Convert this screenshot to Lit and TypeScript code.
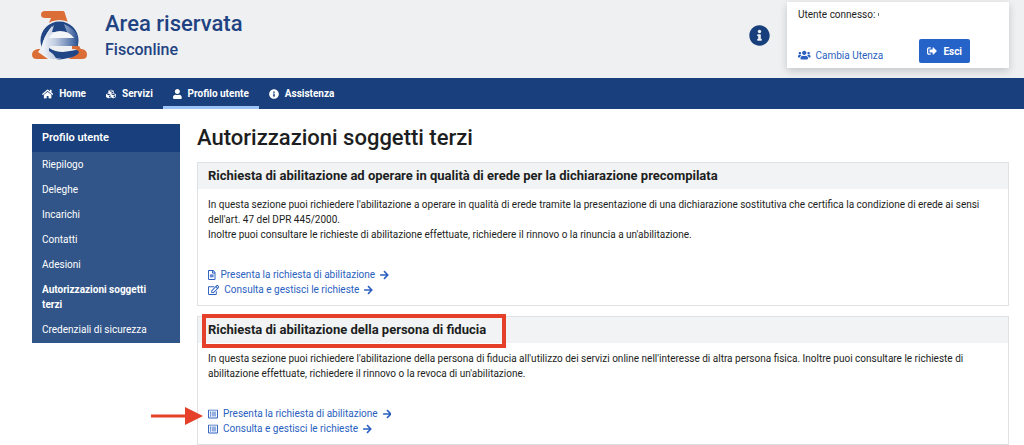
import { LitElement, html, css, svg } from "lit";
import { customElement } from "lit/decorators.js";
import { classMap } from "lit/directives/class-map.js";

type Icon = { w: number; d: string };

const ICONS: Record<string, Icon> = {
  home: { w: 576, d: "M280.37 148.26L96 300.11V464a16 16 0 0 0 16 16l112.06-.29a16 16 0 0 0 15.92-16V368a16 16 0 0 1 16-16h64a16 16 0 0 1 16 16v95.64a16 16 0 0 0 16 16.05L464 480a16 16 0 0 0 16-16V300L295.67 148.26a12.19 12.19 0 0 0-15.3 0zM571.6 251.47L488 182.56V44.05a12 12 0 0 0-12-12h-56a12 12 0 0 0-12 12v72.61L318.47 43a48 48 0 0 0-61 0L4.34 251.47a12 12 0 0 0-1.6 16.9l25.5 31A12 12 0 0 0 45.15 301l235.22-193.74a12.19 12.19 0 0 1 15.3 0L530.9 301a12 12 0 0 0 16.9-1.6l25.5-31a12 12 0 0 0-1.7-16.93z" },
  cubes: { w: 512, d: "M488.6 250.2L392 214V105.5c0-15-9.3-28.4-23.4-33.7l-100-37.5c-8.1-3.1-17.1-3.1-25.3 0l-100 37.5c-14.1 5.3-23.4 18.7-23.4 33.7V214l-96.6 36.2C9.3 255.5 0 268.9 0 283.9V394c0 13.6 7.7 26.1 19.9 32.2l100 50c10.1 5.1 22.1 5.1 32.2 0l103.9-52 103.9 52c10.1 5.1 22.1 5.1 32.2 0l100-50c12.2-6.1 19.9-18.6 19.9-32.2V283.9c0-15-9.3-28.4-23.4-33.7zM358 214.8l-85 31.9v-68.2l85-37v73.3zM154 104.1l102-38.2 102 38.2v.6l-102 41.4-102-41.4v-.6zm84 291.1l-85 42.5v-79.1l85-38.8v75.4zm0-112l-102 41.4-102-41.4v-.6l102-38.2 102 38.2v.6zm240 112l-85 42.5v-79.1l85-38.8v75.4zm0-112l-102 41.4-102-41.4v-.6l102-38.2 102 38.2v.6z" },
  user: { w: 448, d: "M224 256c70.7 0 128-57.3 128-128S294.7 0 224 0 96 57.3 96 128s57.3 128 128 128zm89.6 32h-16.7c-22.2 10.2-46.9 16-72.9 16s-50.6-5.8-72.9-16h-16.7C60.2 288 0 348.2 0 422.4V464c0 26.5 21.5 48 48 48h352c26.5 0 48-21.5 48-48v-41.6c0-74.2-60.2-134.4-134.4-134.4z" },
  info: { w: 512, d: "M256 8C119.043 8 8 119.083 8 256c0 136.997 111.043 248 248 248s248-111.003 248-248C504 119.083 392.957 8 256 8zm0 110c23.196 0 42 18.804 42 42s-18.804 42-42 42-42-18.804-42-42 18.804-42 42-42zm56 254c0 6.627-5.373 12-12 12h-88c-6.627 0-12-5.373-12-12v-24c0-6.627 5.373-12 12-12h12v-64h-12c-6.627 0-12-5.373-12-12v-24c0-6.627 5.373-12 12-12h64c6.627 0 12 5.373 12 12v100h12c6.627 0 12 5.373 12 12v24z" },
  users: { w: 640, d: "M96 224c35.3 0 64-28.7 64-64s-28.7-64-64-64-64 28.700-64 64 28.700 64 64 64zm448 0c35.300 0 64-28.700 64-64s-28.700-64-64-64-64 28.700-64 64 28.700 64 64 64zm32 32h-64c-17.600 0-33.500 7.100-45.100 18.600 40.300 22.100 68.900 62 75.100 109.400h66c17.700 0 32-14.300 32-32v-32c0-35.300-28.700-64-64-64zm-256 0c61.900 0 112-50.100 112-112S381.900 32 320 32 208 82.100 208 144s50.100 112 112 112zm76.800 32h-8.300c-20.800 10-43.900 16-68.500 16s-47.600-6-68.500-16h-8.300C179.600 288 128 339.600 128 403.200V432c0 26.500 21.500 48 48 48h288c26.500 0 48-21.500 48-48v-28.800c0-63.600-51.600-115.200-115.200-115.200zm-223.700-13.400C161.500 263.100 145.600 256 128 256H64c-35.300 0-64 28.700-64 64v32c0 17.700 14.300 32 32 32h65.900c6.300-47.400 34.900-87.300 75.200-109.400z" },
  signout: { w: 512, d: "M497 273L329 441c-15 15-41 4.500-41-17v-96H152c-13.300 0-24-10.700-24-24v-96c0-13.300 10.700-24 24-24h136V88c0-21.400 25.900-32 41-17l168 168c9.300 9.400 9.300 24.600 0 34zM192 436v-40c0-6.600-5.400-12-12-12H96c-17.700 0-32-14.300-32-32V160c0-17.700 14.300-32 32-32h84c6.600 0 12-5.400 12-12V76c0-6.600-5.400-12-12-12H96c-53 0-96 43-96 96v192c0 53 43 96 96 96h84c6.600 0 12-5.400 12-12z" },
  file: { w: 384, d: "M288 248v28c0 6.600-5.400 12-12 12H108c-6.600 0-12-5.400-12-12v-28c0-6.600 5.400-12 12-12h168c6.600 0 12 5.400 12 12zm-12 72H108c-6.600 0-12 5.400-12 12v28c0 6.600 5.400 12 12 12h168c6.600 0 12-5.400 12-12v-28c0-6.600-5.400-12-12-12zm108-188.100V464c0 26.500-21.500 48-48 48H48c-26.500 0-48-21.500-48-48V48C0 21.500 21.500 0 48 0h204.100C264.800 0 277 5.100 286 14.100L369.900 98c9 8.900 14.100 21.200 14.100 33.900zm-128-80V128h76.100L256 51.900zM336 464V176H232c-13.300 0-24-10.700-24-24V48H48v416h288z" },
  edit: { w: 576, d: "M402.300 344.900l32-32c5-5 13.700-1.500 13.700 5.700V464c0 26.500-21.500 48-48 48H48c-26.500 0-48-21.500-48-48V112c0-26.500 21.500-48 48-48h273.500c7.100 0 10.700 8.600 5.700 13.700l-32 32c-1.500 1.500-3.500 2.300-5.700 2.300H48v352h352V350.500c0-2.100.8-4.100 2.300-5.600zm156.600-201.800L296.300 405.700l-90.400 10c-26.200 2.900-48.500-19.200-45.600-45.600l10-90.400L432.900 17.100c22.900-22.900 59.900-22.900 82.700 0l43.200 43.200c22.900 22.900 22.900 60 .1 82.800zM460.100 174L402 115.900 216.200 301.800l-7.300 65.300 65.300-7.300L460.100 174zm64.800-79.700l-43.200-43.200c-4.100-4.100-10.800-4.100-14.800 0L436 82l58.100 58.100 30.900-30.900c4-4.200 4-10.800-.1-14.900z" },
  list: { w: 512, d: "M464 32H48C21.490 32 0 53.490 0 80v352c0 26.510 21.490 48 48 48h416c26.510 0 48-21.490 48-48V80c0-26.510-21.490-48-48-48zm-6 400H54a6 6 0 0 1-6-6V86a6 6 0 0 1 6-6h404a6 6 0 0 1 6 6v340a6 6 0 0 1-6 6zm-42-92v24c0 6.627-5.373 12-12 12H204c-6.627 0-12-5.373-12-12v-24c0-6.627 5.373-12 12-12h200c6.627 0 12 5.373 12 12zm0-96v24c0 6.627-5.373 12-12 12H204c-6.627 0-12-5.373-12-12v-24c0-6.627 5.373-12 12-12h200c6.627 0 12 5.373 12 12zm0-96v24c0 6.627-5.373 12-12 12H204c-6.627 0-12-5.373-12-12v-24c0-6.627 5.373-12 12-12h200c6.627 0 12 5.373 12 12zm-252 12c0 19.882-16.118 36-36 36s-36-16.118-36-36 16.118-36 36-36 36 16.118 36 36zm0 96c0 19.882-16.118 36-36 36s-36-16.118-36-36 16.118-36 36-36 36 16.118 36 36zm0 96c0 19.882-16.118 36-36 36s-36-16.118-36-36 16.118-36 36-36 36 16.118 36 36z" },
  arrow: { w: 448, d: "M190.500 66.900l22.200-22.200c9.400-9.400 24.600-9.400 33.900 0L441 239c9.400 9.400 9.400 24.600 0 33.900L246.600 467.300c-9.400 9.400-24.600 9.400-33.900 0l-22.200-22.200c-9.500-9.500-9.300-25 .4-34.300L311.400 296H24c-13.300 0-24-10.700-24-24v-32c0-13.300 10.700-24 24-24h287.400L190.900 101.200c-9.800-9.300-10-24.800-.4-34.300z" },
};

const icon = (name: string) => {
  const i = ICONS[name];
  return html`<svg class="icon" viewBox="0 0 ${i.w} 512" aria-hidden="true">${svg`<path d=${i.d} />`}</svg>`;
};

const NAV = [
  { label: "Home", icon: "home" },
  { label: "Servizi", icon: "cubes" },
  { label: "Profilo utente", icon: "user", active: true },
  { label: "Assistenza", icon: "info" },
];

const MENU = [
  "Riepilogo",
  "Deleghe",
  "Incarichi",
  "Contatti",
  "Adesioni",
  "Autorizzazioni soggetti terzi",
  "Credenziali di sicurezza",
];
const CURRENT = "Autorizzazioni soggetti terzi";

const PANELS = [
  {
    title: "Richiesta di abilitazione ad operare in qualità di erede per la dichiarazione precompilata",
    text: [
      "In questa sezione puoi richiedere l'abilitazione a operare in qualità di erede tramite la presentazione di una dichiarazione sostitutiva che certifica la condizione di erede ai sensi dell'art. 47 del DPR 445/2000.",
      "Inoltre puoi consultare le richieste di abilitazione effettuate, richiedere il rinnovo o la rinuncia a un'abilitazione.",
    ],
    links: [
      { label: "Presenta la richiesta di abilitazione", icon: "file" },
      { label: "Consulta e gestisci le richieste", icon: "edit" },
    ],
    marked: false,
  },
  {
    title: "Richiesta di abilitazione della persona di fiducia",
    text: [
      "In questa sezione puoi richiedere l'abilitazione della persona di fiducia all'utilizzo dei servizi online nell'interesse di altra persona fisica. Inoltre puoi consultare le richieste di abilitazione effettuate, richiedere il rinnovo o la revoca di un'abilitazione.",
    ],
    links: [
      { label: "Presenta la richiesta di abilitazione", icon: "list" },
      { label: "Consulta e gestisci le richieste", icon: "list" },
    ],
    marked: true,
  },
];

@customElement("app-root")
export class AppRoot extends LitElement {
  static styles = css`
    :host {
      display: block;
      font: 10px/15px Roboto, "Liberation Sans", sans-serif;
      color: #1c1e21;
      background: #fff;
    }
    * { box-sizing: border-box; }
    a { color: inherit; text-decoration: none; }
    h1, h2, p, ul { margin: 0; padding: 0; }
    ul { list-style: none; }
    .icon { height: 10px; width: auto; fill: currentColor; flex: none; display: block; }

    .top {
      display: flex;
      justify-content: space-between;
      align-items: flex-start;
      padding: 2px 15px 10px 32px;
      background: #eef0f2;
    }
    .brand { display: flex; gap: 17px; padding-top: 8px; color: #1f4382; }
    .logo { width: 56px; height: 50px; display: block; }
    .names { font-weight: 500; }
    .area { font-size: 22px; line-height: 28px; }
    .site { font-size: 16px; line-height: 24px; }
    .account { display: flex; gap: 17px; align-items: center; }
    .help { border: 0; background: none; padding: 0; color: #173f7c; }
    .help .icon { height: 21px; }
    .card {
      width: 222px;
      height: 66px;
      padding: 5px 39px 5px 11px;
      background: #fff;
      box-shadow: 0 3px 8px rgba(0, 0, 0, 0.18);
      display: flex;
      flex-direction: column;
      justify-content: space-between;
    }
    .who { display: flex; align-items: center; gap: 3px; }
    .who::after { content: ""; width: 1px; height: 3px; background: #777; }
    .row { display: flex; justify-content: space-between; align-items: center; }
    .switch { display: flex; align-items: center; gap: 5px; color: #2a5fc0; padding-top: 8px; }
    .exit {
      display: flex;
      align-items: center;
      gap: 6px;
      height: 24px;
      padding: 0 8px;
      border: 0;
      border-radius: 2px;
      background: #2663c9;
      color: #fff;
      font: inherit;
      font-weight: 700;
    }

    .nav { display: flex; padding: 0 32px; background: #193f7c; color: #fff; font-weight: 700; }
    .tab {
      display: flex;
      align-items: center;
      gap: 6px;
      height: 31px;
      padding: 3px 10px 0;
      border-bottom: 3px solid transparent;
    }
    .tab.active { border-color: #9cc4f5; }

    .page {
      display: grid;
      grid-template-columns: 148px minmax(0, 1fr);
      gap: 17px;
      align-items: start;
      padding: 15px 15px 0 32px;
    }
    .side { background: #315588; color: #fff; padding-bottom: 1px; }
    .side h2 {
      padding: 0 10px;
      background: #193f7c;
      font-size: 11px;
      line-height: 28px;
      font-weight: 600;
    }
    .side a { display: block; padding: 5px 20px 5px 10px; }
    .side a.current { font-weight: 700; }

    .content { display: flex; flex-direction: column; gap: 10px; }
    h1 { font-size: 22px; line-height: 28px; font-weight: 500; }
    .panel { border: 1px solid #dfe2e5; }
    .panel header { position: relative; height: 26px; padding: 0 10px; background: #f2f3f5; }
    .panel h2 { font-size: 13px; line-height: 26px; font-weight: 700; }
    .body { display: flex; flex-direction: column; gap: 25px; padding: 8px 10px; }
    .body li { display: flex; position: relative; }
    .body li a { display: flex; align-items: center; gap: 5px; color: #2a5fc0; }
    .frame {
      position: absolute;
      inset: -3px auto -5px 4px;
      width: 304px;
      border: 4px solid #e5402a;
    }
    .pointer { position: absolute; right: calc(100% + 5px); top: 1px; width: 52px; height: 18px; }
  `;

  private logo() {
    return html`<svg class="logo" viewBox="0 0 56 50" role="img" aria-label="Agenzia delle Entrate">
      <defs>
        <linearGradient id="e" x1="0" y1="0" x2="1" y2="0">
          <stop offset="0" stop-color="#f1f4f9" />
          <stop offset="0.35" stop-color="#c3cee3" />
          <stop offset="0.75" stop-color="#6d88b7" />
          <stop offset="1" stop-color="#2b5190" />
        </linearGradient>
      </defs>
      <path fill="#db6d36" d="M13 1H31Q32 1 32.500 2L36 13H17L19 8H13Q9 8 9 4.500Q9 1 13 1Z" />
      <path fill="#db6d36" d="M6 39H50Q55 40 55 44.500Q55 49 50 49H5Q0 49 0 44.500Q0 40 6 39Z" />
      <circle cx="27.500" cy="30.500" r="20.500" fill="#eef0f2" />
      <circle cx="27.500" cy="30.500" r="19" fill="#204685" />
      <path fill="#eef0f2" d="M20 16Q12 26 9 38L6 42L16 49H30Q18 46 17 37Z" />
      <path fill="url(#e)" d="M22 15L20 22H35L32 14Q43 19 46 27V36H18Q19 45 29 49H19Q9 45 11 32Q14 22 22 15Z" />
      <path fill="#204685" d="M27 15L31 22H23Z" />
      <path fill="#f3f5f8" d="M17 28Q20 21 28 21Q37 21 42 28Z" />
      <path fill="#eef0f2" d="M18 36H48V40Q40 40 40 42Q25 44 18 39Z" />
      <path fill="#db6d36" d="M40 36H47L50 41L47 44Q47 39 40 39Z" />
      <path fill="#204685" d="M17 38Q23 42 31 42L45 40Q48 41 46 44Q38 50 24 48Q21 43 17 41Z" />
    </svg>`;
  }

  render() {
    return html`
      <header class="top">
        <div class="brand">
          ${this.logo()}
          <div class="names">
            <div class="area">Area riservata</div>
            <div class="site">Fisconline</div>
          </div>
        </div>
        <div class="account">
          <button class="help" aria-label="Informazioni">${icon("info")}</button>
          <div class="card">
            <div class="who">Utente connesso:</div>
            <div class="row">
              <a class="switch" href="#">${icon("users")}<span>Cambia Utenza</span></a>
              <button class="exit">${icon("signout")}<span>Esci</span></button>
            </div>
          </div>
        </div>
      </header>
      <nav class="nav">
        ${NAV.map(
          (n) => html`<a href="#" class=${classMap({ tab: true, active: !!n.active })}>${icon(n.icon)}<span>${n.label}</span></a>`
        )}
      </nav>
      <div class="page">
        <aside class="side">
          <h2>Profilo utente</h2>
          <ul>
            ${MENU.map((m) => html`<li><a href="#" class=${classMap({ current: m === CURRENT })}>${m}</a></li>`)}
          </ul>
        </aside>
        <main class="content">
          <h1>Autorizzazioni soggetti terzi</h1>
          ${PANELS.map(
            (p) => html`<section class="panel">
              <header>
                <h2>${p.title}</h2>
                ${p.marked ? html`<div class="frame"></div>` : null}
              </header>
              <div class="body">
                <div>${p.text.map((t) => html`<p>${t}</p>`)}</div>
                <ul>
                  ${p.links.map(
                    (l, i) => html`<li>
                      <a href="#">${icon(l.icon)}<span>${l.label}</span>${icon("arrow")}</a>
                      ${p.marked && i === 0
                        ? html`<svg class="pointer" viewBox="0 0 52 18" aria-hidden="true"><path fill="#e5402a" d="M0 7.500H34V0L52 9L34 18V10.500H0Z" /></svg>`
                        : null}
                    </li>`
                  )}
                </ul>
              </div>
            </section>`
          )}
        </main>
      </div>
    `;
  }
}
